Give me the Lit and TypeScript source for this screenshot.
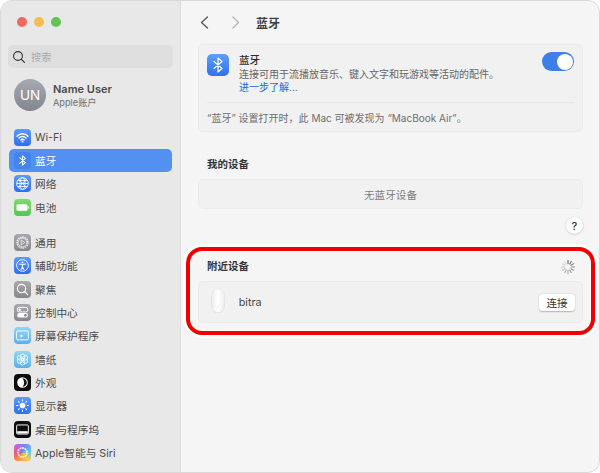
import { LitElement, html, css, svg } from "lit";
import { customElement } from "lit/decorators.js";

const icons: Record<string, unknown> = {
  wifi: svg`<path d="M3.200 7.600a8 8 0 0 1 11.600 0M5.300 9.600a5 5 0 0 1 7.400 0M7.300 11.600a2.200 2.200 0 0 1 3.400 0" fill="none" stroke="#fff" stroke-width="1.500" stroke-linecap="round"/><circle cx="9" cy="13.400" r="1" fill="#fff"/>`,
  bt: svg`<path d="M6 6 12 11.200 9 14V4l3 2.800L6 12" fill="none" stroke="#fff" stroke-width="1.100" stroke-linejoin="round" stroke-linecap="round"/>`,
  globe: svg`<g fill="none" stroke="#fff" stroke-width=".9"><circle cx="9" cy="9" r="6.200"/><ellipse cx="9" cy="9" rx="2.800" ry="6.200"/><path d="M3 9h12M4 5.800h10M4 12.200h10M5 4.500l8 9M13 4.500l-8 9"/></g>`,
  battery: svg`<rect x="2.600" y="5.600" width="11.800" height="6.800" rx="1.600" fill="#fff"/><rect x="15" y="7.600" width="1" height="2.800" rx=".5" fill="#fff"/>`,
  gear: svg`<g fill="none" stroke="#f4f4f4"><circle cx="9" cy="9" r="5.800" stroke-width="1.400" stroke-dasharray="1.600 .8"/><circle cx="9" cy="9" r="4.600" stroke-width=".8"/><path d="M7.600 6.400 11.400 9l-3.800 2.600z" stroke-width=".8"/></g>`,
  access: svg`<circle cx="9" cy="9" r="6.200" fill="none" stroke="#fff" stroke-width="1"/><circle cx="9" cy="5.700" r="1" fill="#fff"/><path d="M5.800 7.400 9 8l3.200-.6M9 8v2.600M9 10.600l-1.600 2.800M9 10.600l1.600 2.800" fill="none" stroke="#fff" stroke-width="1.100" stroke-linecap="round"/>`,
  search: svg`<circle cx="8" cy="8" r="4.400" fill="none" stroke="#fff" stroke-width="1.200"/><path d="m11.200 11.200 3.200 3.200" stroke="#fff" stroke-width="1.400" stroke-linecap="round"/>`,
  control: svg`<rect x="3.400" y="3.600" width="11.200" height="4.800" rx="2" fill="none" stroke="#fff" stroke-width="1"/><circle cx="6" cy="6" r="1.300" fill="#fff"/><rect x="3.400" y="9.600" width="11.200" height="4.800" rx="2" fill="#fff"/><circle cx="12" cy="12" r="1.400" fill="#888"/>`,
  saver: svg`<rect x="2.800" y="4.200" width="12.400" height="9.400" rx="1.200" fill="none" stroke="#fff" stroke-width="1"/><path d="M6 9.500l1.300-.5.5-1.300.5 1.300 1.300.5-1.300.5-.5 1.300-.5-1.300zM10.600 7.200h.8" fill="#fff" stroke="#fff" stroke-width=".5"/>`,
  flower: svg`<g fill="none" stroke="#fff" stroke-width=".9"><circle cx="9" cy="5.600" r="2.500"/><circle cx="9" cy="12.400" r="2.500"/><circle cx="6" cy="7.300" r="2.500"/><circle cx="12" cy="7.300" r="2.500"/><circle cx="6" cy="10.700" r="2.500"/><circle cx="12" cy="10.700" r="2.500"/></g>`,
  appearance: svg`<circle cx="9" cy="9" r="5.600" fill="#fff"/><path d="M9 4.400a4.600 4.600 0 0 1 0 9.200 7 7 0 0 0 0-9.200" fill="#111"/>`,
  sun: svg`<circle cx="9" cy="9" r="3" fill="#fff"/><path d="M9 2.800v1.400M9 13.800v1.400M2.800 9h1.400M13.800 9h1.400M4.600 4.600l1 1M12.400 12.400l1 1M4.600 13.400l1-1M12.400 5.600l1-1" stroke="#fff" stroke-width="1.100" stroke-linecap="round"/>`,
  desktop: svg`<rect x="2.800" y="4.200" width="12.400" height="9.600" rx="1" fill="none" stroke="#fff" stroke-width="1"/><rect x="3.400" y="10.800" width="11.200" height="2.400" fill="#fff"/>`,
  ai: svg`<circle cx="9" cy="9" r="4.800" fill="none" stroke="#fff" stroke-width="1.600" stroke-dasharray="2 .7"/>`,
};

const groups = [
  [
    ["wifi", "Wi-Fi", "blue"], ["bt", "蓝牙", "blue"], ["globe", "网络", "blue"], ["battery", "电池", "green"],
  ],
  [
    ["gear", "通用", "gray"], ["access", "辅助功能", "blue"], ["search", "聚焦", "gray"], ["control", "控制中心", "gray"],
    ["saver", "屏幕保护程序", "sky"], ["flower", "墙纸", "sky"], ["appearance", "外观", "black"], ["sun", "显示器", "blue"],
    ["desktop", "桌面与程序坞", "black"], ["ai", "Apple智能与 Siri", "rainbow"],
  ],
];

@customElement("app-root")
export class AppRoot extends LitElement {
  static styles = css`
    :host {
      display: block;
      width: 600px;
      height: 473px;
      background: #fff;
      font-family: Inter, "Noto Sans CJK SC", sans-serif;
      color: #333;
      overflow: hidden;
    }
    * { box-sizing: border-box; }
    .window {
      position: relative;
      width: 600px;
      height: 473px;
      display: grid;
      grid-template-columns: 180px 1fr;
      border: 1px solid #d8d8d8;
      border-radius: 12px;
      overflow: hidden;
      background: #f5f5f5;
    }
    .side {
      background: #e8e8e8;
      border-right: 1px solid #dedede;
      padding: 16px 7px 0 7px;
      display: flex;
      flex-direction: column;
    }
    .lights { display: flex; gap: 6.4px; padding-left: 9px; height: 11px; }
    .lights i { width: 10.4px; height: 10.4px; border-radius: 50%; display: block; }
    .search {
      margin-top: 17px;
      height: 23px;
      background: #dedede;
      border-radius: 5px;
      display: flex;
      align-items: center;
      gap: 5px;
      padding-left: 4px;
      font-size: 10.2px;
      color: #a9a9a9;
    }
    .user { display: flex; align-items: center; gap: 7px; margin-top: 11px; padding-left: 6px; height: 32px; }
    .avatar {
      width: 32px; height: 32px; border-radius: 50%;
      background: linear-gradient(#a6a8b2, #83858f);
      color: #fff; font-size: 13.5px; display: flex; align-items: center; justify-content: center;
    }
    .name { font-size: 11px; font-weight: 600; color: #4a4a4a; line-height: 14px; }
    .acct { font-size: 9.2px; color: #6c6c6c; line-height: 13px; }
    .group { display: flex; flex-direction: column; margin-top: 14.5px; }
    .group + .group { margin-top: 11.5px; }
    .row {
      height: 23.4px;
      display: flex;
      align-items: center;
      gap: 4px;
      padding-left: 6px;
      font-size: 10.7px;
      color: #4c4c4c;
      border-radius: 5px;
      margin-right: 1px;
    }
    .row.sel { background: #5290f2; color: #fff; margin-left: 1px; padding-left: 5px; }
    .ic { width: 17px; height: 17px; border-radius: 4px; display: block; flex: none; }
    .blue { background: linear-gradient(#5b9bf8, #2f6ef0); }
    .sel .blue { background: #4384ee; }
    .green { background: linear-gradient(#7fdc70, #56c555); }
    .gray { background: linear-gradient(#a9a9ad, #87878b); }
    .sky { background: linear-gradient(#92d6f6, #5ab0ea); }
    .black { background: #0d0d0d; }
    .rainbow { background: conic-gradient(from 200deg, #f6a03c, #ef5d6a, #c85fe0, #6d8cf0, #5ac4f0, #f6c94a, #f6a03c); }
    .main { display: flex; flex-direction: column; padding: 0 16px 0 17px; min-width: 0; }
    .head { height: 43px; display: flex; align-items: center; }
    .head svg { display: block; }
    .head .sp { width: 14px; }
    .title { font-size: 12px; font-weight: 600; color: #3e3e3e; margin-left: 10px; }
    .card {
      background: #f1f1f1;
      border: 1px solid #ebebeb;
      border-radius: 5px;
    }
    .bt { padding: 0 8px; height: 88px; display: flex; flex-direction: column; }
    .bt-top { display: flex; height: 57px; padding-top: 9px; gap: 10px; }
    .bt-ic { width: 22px; height: 22px; border-radius: 5px; background: linear-gradient(#5e9ff8, #2f70ef); flex: none; }
    .bt-ic svg { display: block; }
    .bt-txt { flex: 1; min-width: 0; }
    .bt-t { font-size: 10.5px; font-weight: 500; color: #2c2c2c; line-height: 15px; margin-top: -1px; }
    .bt-d { font-size: 10px; color: #666; line-height: 13px; white-space: nowrap; }
    .bt-l { font-size: 10px; color: #2466d4; line-height: 13px; }
    .toggle {
      width: 32px; height: 19px; border-radius: 10px; background: #3f7ee8;
      display: flex; justify-content: flex-end; padding: 1.5px; margin-top: -2px; flex: none;
    }
    .toggle i { display: block; width: 16px; height: 16px; border-radius: 50%; background: #fff; }
    .note {
      border-top: 1px solid #e6e6e6;
      flex: 1;
      font-size: 10px;
      color: #6e6e6e;
      display: flex;
      align-items: center;
      white-space: nowrap;
    }
    .sec { font-size: 10.5px; font-weight: 600; color: #333; padding-left: 9px; line-height: 14px; }
    .mine { margin-top: 26px; }
    .empty {
      height: 30px; margin-top: 7px;
      display: flex; align-items: center; justify-content: center;
      font-size: 10.6px; color: #7c7c7c;
    }
    .help-row { display: flex; justify-content: flex-end; height: 17px; margin-top: 8px; }
    .help {
      width: 17px; height: 17px; border-radius: 50%; background: #fff;
      box-shadow: 0 .5px 2px rgba(0,0,0,.25);
      font-size: 11px; font-weight: 500; color: #333;
      display: flex; align-items: center; justify-content: center;
    }
    .near-head { display: flex; justify-content: space-between; align-items: center; margin-top: 23px; height: 20px; padding-right: 7px; }
    .near-head svg { display: block; }
    .device {
      height: 42px; margin-top: 4px;
      display: flex; align-items: center; padding: 0 7px 0 11px;
      font-size: 10.8px; color: #444;
    }
    .device svg { display: block; margin-bottom: 2px; }
    .device span { flex: 1; margin-left: 12.7px; }
    .connect {
      width: 36px; height: 17px; background: #fff; border-radius: 4px;
      box-shadow: 0 .5px 1.5px rgba(0,0,0,.25);
      font-size: 10.5px; color: #333;
      display: flex; align-items: center; justify-content: center;
    }
    .halo {
      position: absolute;
      left: 185px; top: 246px;
      width: 409px; height: 88px;
      border-radius: 16px;
      border: 4px solid #f00000;
      box-shadow: 0 0 0 3px #fff, inset 0 0 0 1px #fafafa;
      pointer-events: none;
    }
  `;

  private spinner() {
    const a = [];
    for (let i = 0; i < 12; i++) {
      const g = 110 + (i * 120) / 12;
      a.push(svg`<line x1="8" y1="1.600" x2="8" y2="4.600" stroke="rgb(${g},${g},${g})" stroke-width="1.200" stroke-linecap="round" transform="rotate(${i * 30} 8 8)"/>`);
    }
    return html`<svg width="16" height="16" viewBox="0 0 16 16">${a}</svg>`;
  }

  render() {
    return html`
      <div class="window">
        <aside class="side">
          <div class="lights">
            <i style="background:#ee6a5f"></i><i style="background:#f5bd4f"></i><i style="background:#61c454"></i>
          </div>
          <div class="search">
            <svg width="14" height="14" viewBox="0 0 14 14"><circle cx="6" cy="6" r="4.400" fill="none" stroke="#333" stroke-width="1.100"/><path d="m9.200 9.200 3.200 3.200" stroke="#333" stroke-width="1.200" stroke-linecap="round"/></svg>
            <span>搜索</span>
          </div>
          <div class="user">
            <div class="avatar">UN</div>
            <div><div class="name">Name User</div><div class="acct">Apple账户</div></div>
          </div>
          ${groups.map(
            (g) => html`<div class="group">
              ${g.map(
                ([ic, label, col]) => html`<div class="row ${ic === "bt" ? "sel" : ""}">
                  <svg class="ic ${col}" viewBox="0 0 18 18">${icons[ic]}</svg><span>${label}</span>
                </div>`
              )}
            </div>`
          )}
        </aside>
        <main class="main">
          <div class="head">
            <svg width="17" height="17" viewBox="0 0 17 17"><path d="M9.500 3 3.500 8.500l6 5.500" fill="none" stroke="#555" stroke-width="1.300" stroke-linecap="round" stroke-linejoin="round"/></svg>
            <div class="sp"></div>
            <svg width="17" height="17" viewBox="0 0 17 17"><path d="M4 3l5.500 5.500L4 14" fill="none" stroke="#b5b5b5" stroke-width="1.300" stroke-linecap="round" stroke-linejoin="round"/></svg>
            <div class="title">蓝牙</div>
          </div>
          <section class="card bt">
            <div class="bt-top">
              <div class="bt-ic"><svg width="22" height="22" viewBox="0 0 22 22"><path d="M7 7.500 15 14.500 11 18V4l4 3.500L7 14.500" fill="none" stroke="#fff" stroke-width="1.200" stroke-linejoin="round" stroke-linecap="round"/></svg></div>
              <div class="bt-txt">
                <div class="bt-t">蓝牙</div>
                <div class="bt-d">连接可用于流播放音乐、键入文字和玩游戏等活动的配件。</div>
                <div class="bt-l">进一步了解...</div>
              </div>
              <div class="toggle"><i></i></div>
            </div>
            <div class="note">“蓝牙” 设置打开时，此 Mac 可被发现为 “MacBook Air”。</div>
          </section>
          <div class="sec mine">我的设备</div>
          <div class="card empty">无蓝牙设备</div>
          <div class="help-row"><div class="help">?</div></div>
          <div class="sec near-head"><span>附近设备</span>${this.spinner()}</div>
          <div class="card device">
            <svg width="16" height="26" viewBox="0 0 16 26">
              <defs><linearGradient id="m" x1="0" x2="1" y1="0" y2="0"><stop offset="0" stop-color="#ececec"/><stop offset=".5" stop-color="#ffffff"/><stop offset="1" stop-color="#ececec"/></linearGradient></defs>
              <path d="M8 1.500c4.500 0 6.500 3 6.500 8v8c0 5-2.500 7.500-6.500 7.500s-6.500-2.500-6.500-7.500v-8c0-5 2-8 6.500-8z" fill="#cfcfcf" opacity=".6"/>
              <path d="M8 1c4.500 0 6.500 3 6.500 8v8c0 5-2.500 7.500-6.500 7.500s-6.500-2.500-6.500-7.500V9c0-5 2-8 6.500-8z" fill="url(#m)" stroke="#e2e2e2" stroke-width=".5"/>
              <circle cx="8" cy="19" r=".6" fill="#cfcfcf"/>
            </svg>
            <span>bitra</span>
            <div class="connect">连接</div>
          </div>
        </main>
        <div class="halo"></div>
      </div>
    `;
  }
}
